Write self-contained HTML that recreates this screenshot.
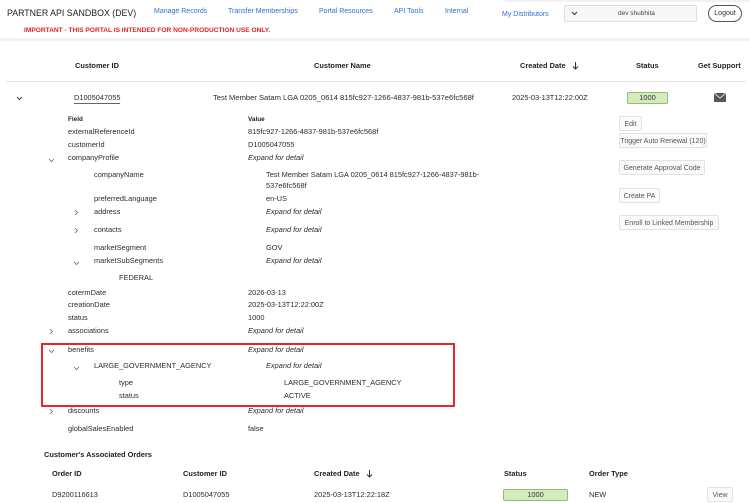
<!DOCTYPE html>
<html><head><meta charset="utf-8"><style>
*{margin:0;padding:0;box-sizing:border-box}
body{width:750px;height:500px;background:#fff;position:relative;overflow:hidden;font-family:"Liberation Sans",sans-serif;color:#2c2c2c}
.t{position:absolute;white-space:nowrap;font-size:7.4px;line-height:10px}
.b{font-weight:bold;color:#222}
.n{color:#2f6fce;font-size:7px}
.i{font-style:italic}
.btn{position:absolute;border:1px solid #e2e2e2;border-radius:2px;background:#fafafa;font-size:7px;color:#555;text-align:center;line-height:15px;white-space:nowrap}
.badge{position:absolute;background:#d4ecbd;border:1px solid #8fbf72;border-radius:2px;font-size:7.4px;text-align:center;color:#333}
svg{position:absolute}
</style></head><body>
<div style="position:absolute;left:0;top:38px;width:750px;height:3px;background:#f2f2f2"></div>
<div style="position:absolute;left:505px;top:0;width:245px;height:2px;background:#f2f2f2"></div>
<div class="t" style="left:7px;top:7px;font-size:8.8px;line-height:12px;color:#222">PARTNER API SANDBOX (DEV)</div>
<div class="t n" style="left:154px;top:7px">Manage Records</div>
<div class="t n" style="left:228px;top:7px">Transfer Memberships</div>
<div class="t n" style="left:319px;top:7px">Portal Resources</div>
<div class="t n" style="left:394px;top:7px">API Tools</div>
<div class="t n" style="left:445px;top:7px">Internal</div>
<div class="t n" style="left:502px;top:10px">My Distributors</div>
<div style="position:absolute;left:564px;top:5px;width:133px;height:17px;border:1px solid #e0e0e0;border-radius:2px;background:#f7f7f7"></div>
<svg style="left:571px;top:11px" width="7" height="5"><path d="M1 1L3.5 3.5L6 1" stroke="#333" fill="none" stroke-width="1"/></svg>
<div class="t" style="left:618px;top:9px;font-size:6.5px;color:#444">dev shubhita</div>
<div style="position:absolute;left:708px;top:5px;width:34px;height:17px;border:1px solid #555;border-radius:9px;font-size:7px;text-align:center;line-height:15px">Logout</div>
<div class="t b" style="left:24px;top:26px;color:#e32222;font-size:6.6px">IMPORTANT - THIS PORTAL IS INTENDED FOR NON-PRODUCTION USE ONLY.</div>

<div class="t b" style="left:75px;top:61px">Customer ID</div>
<div class="t b" style="left:314px;top:61px">Customer Name</div>
<div class="t b" style="left:520px;top:61px">Created Date</div>
<svg style="left:572px;top:62px" width="7" height="8"><path d="M3.5 0V7M1 4.5L3.5 7L6 4.5" stroke="#333" fill="none"/></svg>
<div class="t b" style="left:636px;top:61px">Status</div>
<div class="t b" style="left:698px;top:61px">Get Support</div>
<div style="position:absolute;left:6px;top:81px;width:740px;height:1px;background:#e4e4e4"></div>

<svg style="left:16px;top:96px" width="7" height="5"><path d="M1 1L3.5 3.5L6 1" stroke="#444" fill="none"/></svg>
<div class="t" style="left:74px;top:93px;border-bottom:1px solid #666">D1005047055</div>
<div class="t" style="left:213px;top:93px;font-size:7.6px">Test Member Satam LGA 0205_0614 815fc927-1266-4837-981b-537e6fc568f</div>
<div class="t" style="left:512px;top:93px">2025-03-13T12:22:00Z</div>
<div class="badge" style="left:627px;top:92px;width:41px;height:12px;line-height:10px">1000</div>
<svg style="left:714px;top:93px" width="12" height="9"><rect width="12" height="9" fill="#555"/><path d="M0 0L6 5L12 0" stroke="#ddd" fill="none"/></svg>

<div class="t b" style="left:68px;top:115px;font-size:6.4px">Field</div>
<div class="t b" style="left:248px;top:115px;font-size:6.4px">Value</div>
<div class="t" style="left:68px;top:127px">externalReferenceId</div>
<div class="t" style="left:248px;top:127px">815fc927-1266-4837-981b-537e6fc568f</div>
<div class="t" style="left:68px;top:140px">customerId</div>
<div class="t" style="left:248px;top:140px">D1005047055</div>
<div class="t" style="left:68px;top:153px">companyProfile</div>
<div class="t i" style="left:248px;top:153px">Expand for detail</div>
<div class="t" style="left:94px;top:170px">companyName</div>
<div class="t" style="left:266px;top:170px">Test Member Satam LGA 0205_0614 815fc927-1266-4837-981b-</div>
<div class="t" style="left:266px;top:181px">537e6fc568f</div>
<div class="t" style="left:94px;top:194px">preferredLanguage</div>
<div class="t" style="left:266px;top:194px">en-US</div>
<div class="t" style="left:94px;top:207px">address</div>
<div class="t i" style="left:266px;top:207px">Expand for detail</div>
<div class="t" style="left:94px;top:225px">contacts</div>
<div class="t i" style="left:266px;top:225px">Expand for detail</div>
<div class="t" style="left:94px;top:243px">marketSegment</div>
<div class="t" style="left:266px;top:243px">GOV</div>
<div class="t" style="left:94px;top:256px">marketSubSegments</div>
<div class="t i" style="left:266px;top:256px">Expand for detail</div>
<div class="t" style="left:119px;top:273px">FEDERAL</div>
<div class="t" style="left:68px;top:288px">cotermDate</div>
<div class="t" style="left:248px;top:288px">2026-03-13</div>
<div class="t" style="left:68px;top:300px">creationDate</div>
<div class="t" style="left:248px;top:300px">2025-03-13T12:22:00Z</div>
<div class="t" style="left:68px;top:313px">status</div>
<div class="t" style="left:248px;top:313px">1000</div>
<div class="t" style="left:68px;top:326px">associations</div>
<div class="t i" style="left:248px;top:326px">Expand for detail</div>
<div class="t" style="left:68px;top:345px">benefits</div>
<div class="t i" style="left:248px;top:345px">Expand for detail</div>
<div class="t" style="left:94px;top:361px">LARGE_GOVERNMENT_AGENCY</div>
<div class="t i" style="left:266px;top:361px">Expand for detail</div>
<div class="t" style="left:119px;top:378px">type</div>
<div class="t" style="left:284px;top:378px">LARGE_GOVERNMENT_AGENCY</div>
<div class="t" style="left:119px;top:391px">status</div>
<div class="t" style="left:284px;top:391px">ACTIVE</div>
<div class="t" style="left:68px;top:406px">discounts</div>
<div class="t i" style="left:248px;top:406px">Expand for detail</div>
<div class="t" style="left:68px;top:424px">globalSalesEnabled</div>
<div class="t" style="left:248px;top:424px">false</div>
<div style="position:absolute;left:41px;top:343px;width:414px;height:64px;border:2px solid #e8252b"></div>

<svg style="left:48px;top:158px" width="7" height="5"><path d="M1 1L3.5 3.5L6 1" stroke="#666" fill="none" stroke-width=".8"/></svg>
<svg style="left:74px;top:209px" width="5" height="7"><path d="M1 1L3.5 3.5L1 6" stroke="#666" fill="none" stroke-width=".8"/></svg>
<svg style="left:74px;top:227px" width="5" height="7"><path d="M1 1L3.5 3.5L1 6" stroke="#666" fill="none" stroke-width=".8"/></svg>
<svg style="left:73px;top:261px" width="7" height="5"><path d="M1 1L3.5 3.5L6 1" stroke="#666" fill="none" stroke-width=".8"/></svg>
<svg style="left:49px;top:328px" width="5" height="7"><path d="M1 1L3.5 3.5L1 6" stroke="#666" fill="none" stroke-width=".8"/></svg>
<svg style="left:48px;top:349px" width="7" height="5"><path d="M1 1L3.5 3.5L6 1" stroke="#666" fill="none" stroke-width=".8"/></svg>
<svg style="left:73px;top:366px" width="7" height="5"><path d="M1 1L3.5 3.5L6 1" stroke="#666" fill="none" stroke-width=".8"/></svg>
<svg style="left:49px;top:408px" width="5" height="7"><path d="M1 1L3.5 3.5L1 6" stroke="#666" fill="none" stroke-width=".8"/></svg>

<div class="btn" style="left:619px;top:116px;width:23px;height:15px">Edit</div>
<div class="btn" style="left:619px;top:133px;width:88px;height:15px">Trigger Auto Renewal (120)</div>
<div class="btn" style="left:619px;top:160px;width:86px;height:15px">Generate Approval Code</div>
<div class="btn" style="left:619px;top:188px;width:41px;height:15px">Create PA</div>
<div class="btn" style="left:619px;top:215px;width:100px;height:15px">Enroll to Linked Membership</div>

<div class="t b" style="left:44px;top:450px">Customer's Associated Orders</div>
<div class="t b" style="left:52px;top:469px">Order ID</div>
<div class="t b" style="left:183px;top:469px">Customer ID</div>
<div class="t b" style="left:314px;top:469px">Created Date</div>
<svg style="left:366px;top:470px" width="7" height="8"><path d="M3.5 0V7M1 4.5L3.5 7L6 4.5" stroke="#333" fill="none"/></svg>
<div class="t b" style="left:504px;top:469px">Status</div>
<div class="t b" style="left:589px;top:469px">Order Type</div>
<div class="t" style="left:52px;top:490px">D9200116613</div>
<div class="t" style="left:183px;top:490px">D1005047055</div>
<div class="t" style="left:314px;top:490px">2025-03-13T12:22:18Z</div>
<div class="badge" style="left:503px;top:489px;width:65px;height:12px;line-height:10px">1000</div>
<div class="t" style="left:589px;top:490px">NEW</div>
<div class="btn" style="left:707px;top:487px;width:26px;height:15px">View</div>
</body></html>
